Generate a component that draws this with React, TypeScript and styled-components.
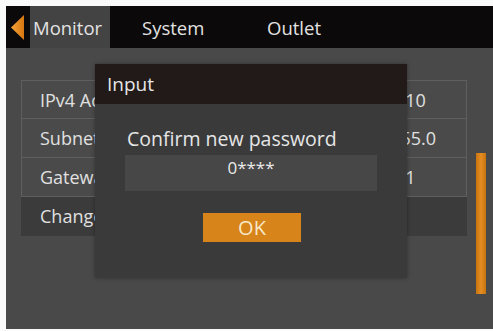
import React from "react";
import styled, { createGlobalStyle } from "styled-components";

const GlobalStyle = createGlobalStyle`
  html, body {
    margin: 0;
    padding: 0;
    background: #f4f4f4;
  }
  body {
    font-family: "Open Sans", Lato, "DejaVu Sans", sans-serif;
  }
`;

type Row = { label: string; value: string; action?: boolean };

const rows: Row[] = [
  { label: "IPv4 Address", value: "192.168.1.10" },
  { label: "Subnet Mask", value: "255.255.255.0" },
  { label: "Gateway", value: "192.168.1.1" },
  { label: "Change Password", value: "", action: true },
];

const tabs = [
  { name: "Monitor", active: true },
  { name: "System", active: false },
  { name: "Outlet", active: false },
];

const BackArrow = () => (
  <svg width="13" height="25" viewBox="0 0 13 25">
    <defs>
      <linearGradient id="arr" x1="0" y1="0" x2="1" y2="0">
        <stop offset="0" stopColor="#f4a23c" />
        <stop offset="1" stopColor="#d8780f" />
      </linearGradient>
    </defs>
    <polygon points="13,0 13,25 0,12.5" fill="url(#arr)" />
  </svg>
);

export default function App() {
  return (
    <Frame>
      <GlobalStyle />
      <Screen>
        <TabBar>
          <BackTab>
            <BackArrow />
          </BackTab>
          {tabs.map((t) => (
            <Tab key={t.name} active={t.active}>
              {t.name}
            </Tab>
          ))}
        </TabBar>

        <Content>
          <List>
            {rows.map((r) => (
              <ListRow key={r.label} action={r.action}>
                <Label>{r.label}</Label>
                <Value>{r.value}</Value>
              </ListRow>
            ))}
          </List>
          <ScrollTrack>
            <ScrollThumb />
          </ScrollTrack>
        </Content>

        {/* modal sits over the list */}
        <Dialog>
          <DialogHeader>Input</DialogHeader>
          <DialogBody>
            <Prompt>Confirm new password</Prompt>
            <Field>0****</Field>
            <OkButton>OK</OkButton>
          </DialogBody>
        </Dialog>
      </Screen>
    </Frame>
  );
}

// styles

const Frame = styled.div`
  padding: 6px 0 2px 6px;
  width: 493px;
  height: 331px;
  box-sizing: border-box;
  background: #fafafa;
`;

const Screen = styled.div`
  position: relative;
  width: 487px;
  height: 323px;
  background: #494949;
  display: flex;
  flex-direction: column;
  overflow: hidden;
`;

const TabBar = styled.div`
  height: 42px;
  flex-shrink: 0;
  display: flex;
  background: #0b0909;
`;

const BackTab = styled.div`
  width: 24px;
  display: flex;
  align-items: center;
  justify-content: flex-end;
  padding-right: 6px;
  box-sizing: border-box;
`;

const Tab = styled.div<{ active?: boolean }>`
  width: ${(p) => (p.active ? "80px" : "125px")};
  padding-left: ${(p) => (p.active ? "3px" : "32px")};
  box-sizing: border-box;
  display: flex;
  align-items: center;
  font-size: 18.5px;
  color: #e2e2e2;
  background: ${(p) => (p.active ? "#434343" : "transparent")};
`;

const Content = styled.div`
  flex: 1;
  display: flex;
  padding: 32px 0 0 15px;
  gap: 9px;
`;

const List = styled.div`
  width: 446px;
  display: flex;
  flex-direction: column;
`;

const ListRow = styled.div<{ action?: boolean }>`
  height: 39px;
  display: grid;
  grid-template-columns: 279px 1fr;
  align-items: center;
  padding-left: 18px;
  box-sizing: border-box;
  font-size: 18px;
  color: #e0e0e0;
  background: ${(p) => (p.action ? "#3b3b3b" : "#4a4a4a")};
  border: 1px solid ${(p) => (p.action ? "#3b3b3b" : "#5f5f5f")};
  & + & {
    border-top: 0;
  }
`;

const Label = styled.span`
  white-space: nowrap;
`;

const Value = styled.span`
  white-space: nowrap;
`;

const ScrollTrack = styled.div`
  width: 10px;
  padding-top: 73px;
`;

const ScrollThumb = styled.div`
  width: 10px;
  height: 141px;
  background: linear-gradient(90deg, #c8740f, #e48d22 50%, #c8740f);
`;

const Dialog = styled.div`
  position: absolute;
  left: 89px;
  top: 58px;
  width: 312px;
  display: flex;
  flex-direction: column;
  box-shadow: 0 0 4px rgba(0, 0, 0, 0.35);
`;

const DialogHeader = styled.div`
  height: 40px;
  display: flex;
  align-items: center;
  padding-left: 12px;
  background: #221919;
  font-size: 19px;
  color: #e6e6e6;
`;

const DialogBody = styled.div`
  height: 174px;
  background: #3a3a3a;
  display: flex;
  flex-direction: column;
  align-items: center;
  padding-top: 22px;
  box-sizing: border-box;
`;

const Prompt = styled.div`
  width: 252px;
  padding-left: 2px;
  box-sizing: border-box;
  font-size: 19.5px;
  color: #e6e6e6;
  line-height: 26px;
`;

const Field = styled.div`
  margin-top: 3px;
  width: 252px;
  height: 36px;
  background: #474747;
  color: #eaeaea;
  font-size: 17px;
  text-align: center;
  padding-top: 1px;
  box-sizing: border-box;
`;

const OkButton = styled.div`
  margin-top: 22px;
  width: 98px;
  height: 29px;
  background: #d7841b;
  color: #f8e8c8;
  font-size: 20px;
  display: flex;
  align-items: center;
  justify-content: center;
  margin-left: 2px;
`;
